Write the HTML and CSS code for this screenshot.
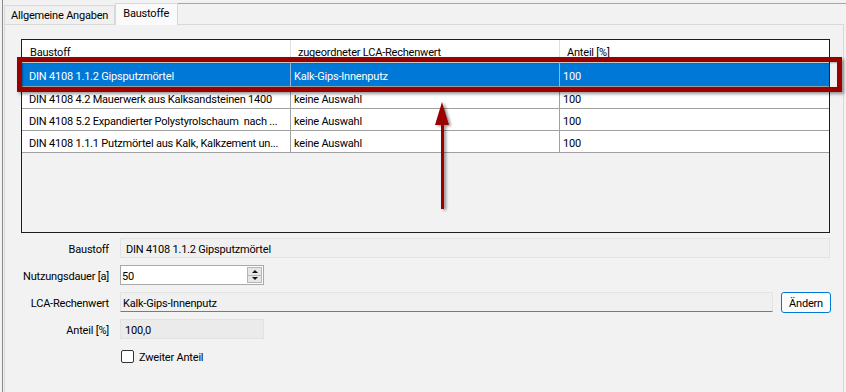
FILE: index.html
```html
<!DOCTYPE html>
<html lang="de">
<head>
    <meta charset="UTF-8">
    <title>Baustoffe</title>
    <link rel="stylesheet" href="styles.css">
</head>
<body>
    <div class="frame">
        <div class="tabs">
            <div class="tab">Allgemeine Angaben</div>
            <div class="tab active">Baustoffe</div>
            <div class="tab-rest"></div>
        </div>
        <div class="page">
            <div class="table">
                <div class="row head">
                    <div class="cell">Baustoff</div>
                    <div class="cell">zugeordneter LCA-Rechenwert</div>
                    <div class="cell">Anteil [%]</div>
                </div>
                <div class="row selected">
                    <div class="cell">DIN 4108 1.1.2 Gipsputzmörtel</div>
                    <div class="cell">Kalk-Gips-Innenputz</div>
                    <div class="cell">100</div>
                </div>
                <div class="row">
                    <div class="cell">DIN 4108 4.2 Mauerwerk aus Kalksandsteinen 1400</div>
                    <div class="cell">keine Auswahl</div>
                    <div class="cell">100</div>
                </div>
                <div class="row">
                    <div class="cell">DIN 4108 5.2 Expandierter Polystyrolschaum&nbsp; nach ...</div>
                    <div class="cell">keine Auswahl</div>
                    <div class="cell">100</div>
                </div>
                <div class="row">
                    <div class="cell">DIN 4108 1.1.1 Putzmörtel aus Kalk, Kalkzement un...</div>
                    <div class="cell">keine Auswahl</div>
                    <div class="cell">100</div>
                </div>
            </div>

            <div class="form">
                <div class="frow">
                    <span class="lbl">Baustoff</span>
                    <div class="box readonly wide">DIN 4108 1.1.2 Gipsputzmörtel</div>
                </div>
                <div class="frow">
                    <span class="lbl">Nutzungsdauer [a]</span>
                    <div class="box number">
                        <span class="num-value">50</span>
                        <span class="spin">
                            <span class="spin-btn"><i class="up"></i></span>
                            <span class="spin-btn"><i class="down"></i></span>
                        </span>
                    </div>
                </div>
                <div class="frow">
                    <span class="lbl">LCA-Rechenwert</span>
                    <div class="box readonly lca">Kalk-Gips-Innenputz</div>
                    <button class="btn">Ändern</button>
                </div>
                <div class="frow">
                    <span class="lbl">Anteil [%]</span>
                    <div class="box disabled small">100,0</div>
                </div>
                <div class="frow">
                    <span class="lbl"></span>
                    <span class="checkbox"></span>
                    <span class="check-label">Zweiter Anteil</span>
                </div>
            </div>
        </div>
    </div>

    <div class="marker"></div>
    <svg class="arrow" width="26" height="116" viewBox="0 0 26 116">
        <polygon points="12,4 5,27 19,27" fill="#9b0000"/>
        <rect x="11" y="25" width="3" height="86" fill="#9b0000"/>
    </svg>
</body>
</html>
```

FILE: styles.css
```css
body {
    margin: 0;
    width: 846px;
    height: 392px;
    overflow: hidden;
    position: relative;
    background-color: #f2f2f2;
    color: #000;
    font-family: Roboto, "Liberation Sans", Arial, sans-serif;
    font-size: 11px;
    letter-spacing: -0.2px;
}
.frame {
    margin-left: 2px;
    height: 392px;
    border-left: 1px solid #8a8a8a;
}

/* tabs */
.tabs {
    display: flex;
    align-items: flex-end;
    height: 24px;
    padding-left: 1px;
}
.tab {
    height: 18px;
    line-height: 20px;
    padding: 0 6px 0 6px;
    border: 1px solid #d9d9d9;
    border-bottom: none;
    background-color: #f0f0f0;
    white-space: nowrap;
}
.tab.active {
    height: 21px;
    line-height: 20px;
    padding: 0 8px 0 7px;
    margin-bottom: -1px;
    position: relative;
    z-index: 1;
    background-color: #fafafa;
}
.tab-rest {
    flex: 1;
    align-self: flex-start;
    margin-top: 3px;
    border-top: 1px solid #a6a6a6;
}

.page {
    margin-left: 1px;
    width: 838px;
    height: 367px;
    border: 1px solid #d9d9d9;
    border-bottom: none;
}

/* grid */
.table {
    margin: 14px 0 0 16px;
    width: 807px;
    height: 192px;
    border: 1px solid #1e1e1e;
}
.row {
    display: grid;
    grid-template-columns: 269px 269px 269px;
    height: 21px;
    border-bottom: 1px solid #a0a0a0;
    background-color: #fff;
}
.cell {
    padding-left: 3px;
    line-height: 26px;
    white-space: nowrap;
    overflow: hidden;
    border-right: 1px solid #a0a0a0;
}
.cell:first-child {
    padding-left: 7px;
}
.cell:last-child {
    border-right: none;
}
.row.head {
    height: 23px;
    border-bottom: none;
}
.row.head .cell {
    padding-left: 7px;
    line-height: 26px;
    border-right-color: #e0e0e0;
}
.row.head .cell:first-child {
    padding-left: 8px;
}
.row.selected {
    height: 23px;
    background-color: #0078d7;
    color: #fff;
}
.row.selected .cell {
    line-height: 27px;
    border-right-color: #9ab8d4;
}

/* form */
.form {
    margin-top: 5px;
    display: flex;
    flex-direction: column;
    gap: 7px;
}
.frow {
    display: flex;
    align-items: center;
    height: 20px;
}
.lbl {
    width: 104px;
    height: 20px;
    line-height: 24px;
    margin-right: 11px;
    text-align: right;
    white-space: nowrap;
}
.box {
    box-sizing: border-box;
    height: 20px;
    line-height: 21px;
    border: 1px solid #e3e3e3;
    white-space: nowrap;
}
.readonly {
    background-color: #f0f0f0;
    padding-left: 5px;
}
.wide {
    width: 710px;
}
.lca {
    width: 653px;
    padding-left: 2px;
    border-bottom-color: #7a7a7a;
}
.number {
    width: 144px;
    display: flex;
    justify-content: space-between;
    background-color: #fff;
    border-color: #a8a8a8;
    padding-left: 1px;
}
.spin {
    width: 15px;
    margin: 1px 1px 1px 0;
    display: flex;
    flex-direction: column;
    border: 1px solid #b5b5b5;
    box-sizing: border-box;
    background-color: #e6e6e6;
}
.spin-btn {
    flex: 1;
    display: flex;
    align-items: center;
    justify-content: center;
}
.spin-btn + .spin-btn {
    border-top: 1px solid #b5b5b5;
}
.up {
    border-left: 3px solid transparent;
    border-right: 3px solid transparent;
    border-bottom: 3px solid #111;
}
.down {
    border-left: 3px solid transparent;
    border-right: 3px solid transparent;
    border-top: 3px solid #111;
}
.btn {
    margin-left: 8px;
    width: 50px;
    height: 21px;
    padding: 2px 0 0;
    border: 1px solid #0078d7;
    border-radius: 3px;
    background-color: #fdfdfd;
    font-family: inherit;
    font-size: 11px;
    letter-spacing: -0.2px;
    color: #000;
}
.disabled {
    width: 144px;
    padding-left: 4px;
    background-color: #ebebeb;
    border-color: #e2e2e2;
}
.checkbox {
    box-sizing: border-box;
    width: 13px;
    height: 13px;
    margin-left: 1px;
    border: 1px solid #333;
    border-radius: 2px;
    background-color: #fff;
}
.check-label {
    margin-left: 5px;
    padding-top: 2px;
}

/* annotation overlay */
.marker {
    position: absolute;
    left: 17px;
    top: 57px;
    width: 825px;
    height: 35px;
    box-sizing: border-box;
    border: 5px solid #9b0000;
    box-shadow: 2px 2px 3px rgba(0, 0, 0, 0.4), inset 1px 1px 2px rgba(0, 0, 0, 0.3);
}
.arrow {
    position: absolute;
    left: 430px;
    top: 98px;
    filter: drop-shadow(2px 1px 1.5px rgba(0, 0, 0, 0.45));
}
```
